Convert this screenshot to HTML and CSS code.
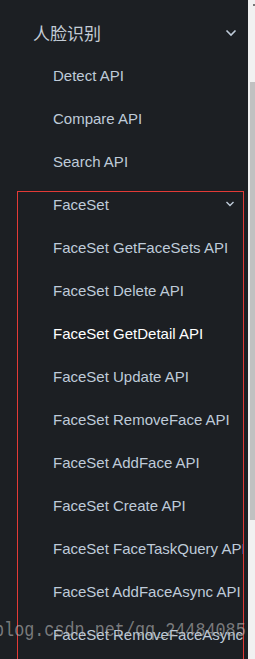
FILE: index.html
```html
<!DOCTYPE html>
<html lang="zh">
<head>
<meta charset="utf-8">
<link rel="stylesheet" href="styles.css">
</head>
<body>
<div class="page">
  <nav class="sidebar">
    <div class="menu-title">
      <span class="title-text">人脸识别</span>
      <svg class="chev chev-lg" width="12" height="8" viewBox="0 0 12 8"><polyline points="1.5,1.5 6,6 10.5,1.5" fill="none" stroke="#bfcbd9" stroke-width="1.6"/></svg>
    </div>
    <ul class="items">
      <li class="item">Detect API</li>
      <li class="item">Compare API</li>
      <li class="item">Search API</li>
    </ul>
    <div class="submenu">
      <div class="sub-title">
        <span>FaceSet</span>
        <svg class="chev chev-sm" width="10" height="6" viewBox="0 0 10 6"><polyline points="1.5,1 5,4.5 8.5,1" fill="none" stroke="#bfcbd9" stroke-width="1.4"/></svg>
      </div>
      <ul class="sub-items">
        <li class="item sub">FaceSet GetFaceSets API</li>
        <li class="item sub">FaceSet Delete API</li>
        <li class="item sub active">FaceSet GetDetail API</li>
        <li class="item sub">FaceSet Update API</li>
        <li class="item sub">FaceSet RemoveFace API</li>
        <li class="item sub">FaceSet AddFace API</li>
        <li class="item sub">FaceSet Create API</li>
        <li class="item sub">FaceSet FaceTaskQuery API</li>
        <li class="item sub">FaceSet AddFaceAsync API</li>
        <li class="item sub">FaceSet RemoveFaceAsync API</li>
      </ul>
    </div>
    <div class="watermark">blog.csdn.net/qq_24484085</div>
  </nav>
  <div class="scrollbar">
    <div class="arrow"></div>
    <div class="thumb"></div>
  </div>
</div>
</body>
</html>
```
FILE: styles.css
```css
html, body {
  margin: 0;
  padding: 0;
  height: 659px;
  overflow: hidden;
  background: #1c1f23;
}
.page {
  display: flex;
  height: 659px;
}
.sidebar {
  position: relative;
  width: 248px;
  flex: 0 0 248px;
  background: #1c1f23;
  overflow: hidden;
  font-family: "Liberation Sans", Arial, sans-serif;
  color: #bfcbd9;
  padding-top: 11px;
  box-sizing: border-box;
}
.menu-title {
  height: 43px;
  display: flex;
  align-items: center;
  justify-content: space-between;
  padding-left: 33px;
  padding-right: 11px;
}
.title-text {
  font-family: "Noto Sans CJK SC", "Liberation Sans", sans-serif;
  font-size: 17px;
  color: #c3ccd6;
}
.chev {
  display: block;
}
ul {
  list-style: none;
  margin: 0;
  padding: 0;
}
.item {
  height: 43px;
  line-height: 43px;
  padding-left: 53px;
  font-size: 15px;
  white-space: nowrap;
}
.submenu {
  margin-top: 8px;
  margin-left: 17px;
  margin-right: 4px;
  border: 1px solid #e23a36;
  padding-bottom: 40px;
  overflow: hidden;
}
.sub-title {
  height: 24px;
  padding-bottom: 10px;
  display: flex;
  align-items: center;
  justify-content: space-between;
  padding-left: 35px;
  padding-right: 8px;
  font-size: 15px;
}
.item.sub {
  padding-left: 35px;
}
.item.active {
  color: #ffffff;
}
.watermark {
  position: absolute;
  left: -6px;
  top: 620px;
  font-family: "Liberation Mono", "DejaVu Sans Mono", monospace;
  font-size: 16.8px;
  transform: scaleY(1.15);
  transform-origin: left top;
  color: rgba(185, 185, 185, 0.6);
  white-space: nowrap;
  pointer-events: none;
}
.scrollbar {
  position: relative;
  flex: 1;
  background: #f1f1f1;
}
.arrow {
  position: absolute;
  right: 0;
  top: 4px;
  width: 2px;
  height: 2px;
  background: #777;
}
.thumb {
  position: absolute;
  left: 2px;
  right: 0;
  top: 82px;
  height: 438px;
  background: #c1c1c1;
}
```
